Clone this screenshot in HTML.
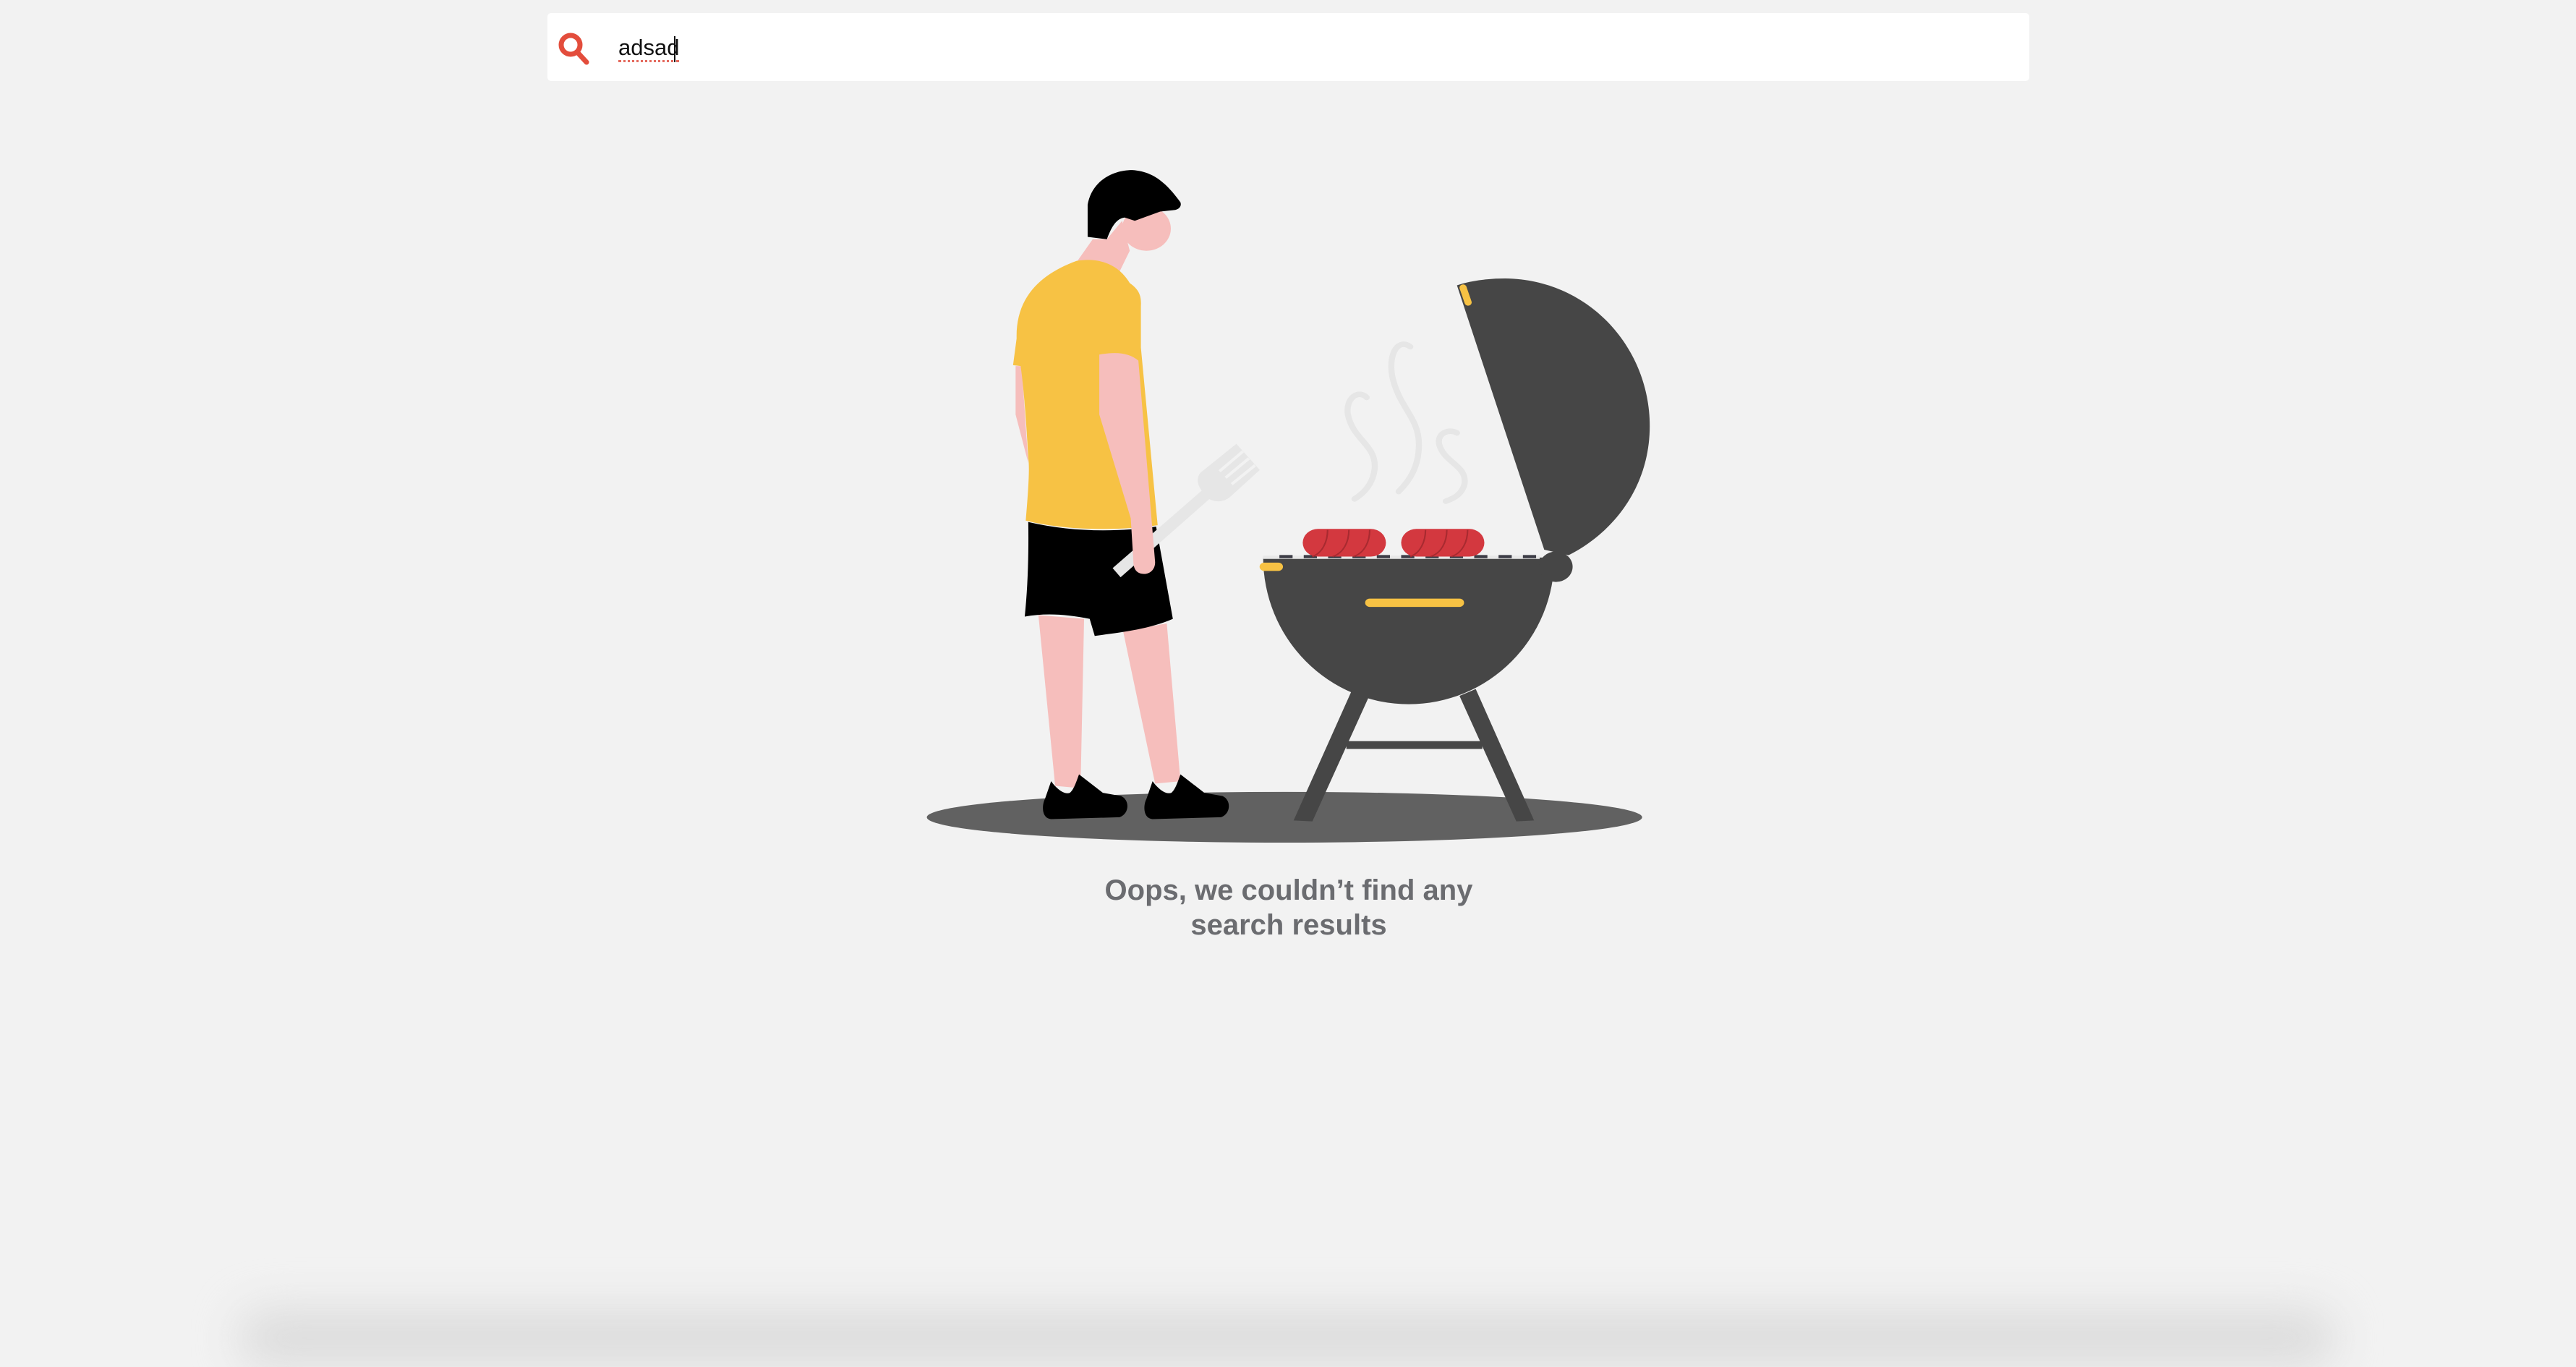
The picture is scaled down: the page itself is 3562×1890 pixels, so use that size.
<!DOCTYPE html>
<html><head><meta charset="utf-8"><style>
html,body{margin:0;padding:0;}
body{width:3562px;height:1806px;background:#f2f2f2;position:relative;overflow:hidden;font-family:"Liberation Sans",sans-serif;}
.bar{position:absolute;left:757px;top:18px;width:2049px;height:94px;background:#fff;border-radius:5px;}
.txt{position:absolute;left:855px;top:48px;font-size:31px;color:#111;}
.txt span{border-bottom:3px dotted #e46a5e;}
.caret{position:absolute;left:932px;top:50px;width:2px;height:36px;background:#111;}
.msg{position:absolute;left:1382px;width:800px;top:1207px;text-align:center;font-weight:bold;font-size:40px;line-height:48px;color:#6b6c70;}
.shade{position:absolute;left:330px;top:1810px;width:2900px;height:80px;background:#dcdcdc;filter:blur(30px);border-radius:40px;}
</style></head><body>
<div class="shade"></div>
<div class="bar"></div>
<svg style="position:absolute;left:0;top:0" width="3562" height="1806">
<circle cx="789" cy="62" r="13" fill="none" stroke="#e34d3c" stroke-width="7"/>
<line x1="799" y1="73" x2="811" y2="86" stroke="#e34d3c" stroke-width="7" stroke-linecap="round"/>
<g transform="translate(1250,200) scale(0.7015,0.6378)">
<ellipse cx="750" cy="1458" rx="705" ry="55" fill="#616161"/>
<path d="M1090,305 Q1130,290 1185,290 C1350,292 1470,440 1470,610 C1470,740 1400,840 1310,890 L1262,878 Z" fill="#464646"/>
<line x1="1102" y1="310" x2="1112" y2="342" stroke="#f7c244" stroke-width="14" stroke-linecap="round"/>
<polygon points="882,1185 915,1200 805,1467 768,1465" fill="#464646"/>
<polygon points="1095,1195 1127,1180 1242,1465 1207,1467" fill="#464646"/>
<rect x="872" y="1293" width="268" height="17" fill="#464646"/>
<path d="M708,895 L1282,895 A287,318 0 0 1 708,895 Z" fill="#464646"/>
<circle cx="1285" cy="915" r="33" fill="#464646"/>
<rect x="708" y="891" width="545" height="7" fill="#e8e8e8"/>
<line x1="740" y1="893" x2="1250" y2="893" stroke="#3c3c46" stroke-width="7" stroke-dasharray="26,22"/>
<line x1="710" y1="915" x2="738" y2="915" stroke="#f7c244" stroke-width="18" stroke-linecap="round"/>
<line x1="918" y1="993" x2="1095" y2="993" stroke="#f7c244" stroke-width="18" stroke-linecap="round"/>
<rect x="786" y="833" width="164" height="60" rx="30" fill="#d3383f"/>
<rect x="980" y="833" width="164" height="60" rx="30" fill="#d3383f"/>
<g fill="none" stroke="#a82a30" stroke-width="3">
<path d="M835,835 C835,860 825,885 805,893"/><path d="M877,835 C877,860 867,885 845,893"/><path d="M918,835 C918,860 908,885 886,893"/>
<path d="M1028,835 C1028,860 1018,885 998,893"/><path d="M1070,835 C1070,860 1060,885 1038,893"/><path d="M1111,835 C1111,860 1101,885 1079,893"/>
</g>
<g fill="none" stroke="#e6e6e6" stroke-width="12" stroke-linecap="round">
<path d="M912,548 C895,530 870,550 875,585 C885,640 930,650 928,700 C925,740 900,760 888,768"/>
<path d="M998,438 C975,420 955,450 962,500 C975,570 1015,590 1015,650 C1015,700 995,730 975,752"/>
<path d="M1090,625 C1075,615 1050,625 1055,650 C1065,690 1110,695 1105,735 C1100,760 1080,768 1068,773"/>
</g>
<polygon points="372,205 400,205 430,165 445,230 425,275 340,255" fill="#f6bebc"/>
<circle cx="478" cy="182" r="48" fill="#f6bebc"/>
<path d="M362,200 L362,130 C370,80 410,55 450,55 C490,58 515,80 545,125 C548,135 540,142 530,142 L505,145 L455,165 L435,158 C420,160 410,175 400,205 Z" fill="#000"/>
<polygon points="220,480 232,480 245,690 220,585" fill="#f6bebc"/>
<polygon points="265,1020 355,1028 348,1395 298,1390" fill="#f6bebc"/>
<polygon points="432,1055 518,1038 545,1380 495,1385" fill="#f6bebc"/>
<path d="M340,252 C380,245 420,255 445,300 C465,315 468,330 467,350 L467,440 L500,825 C440,835 330,840 240,815 C245,750 248,700 245,680 C240,580 235,520 230,480 L215,478 L222,420 C220,330 270,280 340,252 Z" fill="#f7c244"/>
<path d="M245,818 C330,840 420,840 497,828 L530,1028 C480,1052 420,1058 376,1065 L366,1028 C320,1018 280,1015 238,1023 C244,960 246,890 245,818 Z" fill="#000"/>
<g stroke="#e6e6e6" fill="#e6e6e6">
<polygon points="412,918 600,738 616,754 427,937" stroke-width="1"/>
<path d="M585,712 L655,650 L700,705 L640,765 C620,780 595,770 588,750 C578,735 578,722 585,712 Z" stroke-width="2"/>
</g>
<g stroke="#f2f2f2" stroke-width="6">
<line x1="622" y1="708" x2="668" y2="665"/><line x1="634" y1="722" x2="680" y2="680"/><line x1="646" y1="736" x2="692" y2="695"/>
</g>
<path d="M385,455 C420,448 445,452 462,468 L495,905 C495,925 480,933 468,930 C455,927 452,915 452,900 L447,810 L385,585 Z" fill="#f6bebc"/>
<path d="M290,1380 C300,1395 315,1410 327,1405 C335,1398 340,1380 345,1365 L392,1405 L428,1412 C445,1420 445,1450 425,1458 L290,1462 C270,1460 272,1430 278,1418 Z" fill="#000"/>
<path d="M490,1380 C500,1395 515,1410 527,1405 C535,1398 540,1380 545,1365 L592,1405 L628,1412 C645,1420 645,1450 625,1458 L490,1462 C470,1460 472,1430 478,1418 Z" fill="#000"/>
</g>
</svg>
<div class="txt"><span>adsad</span></div>
<div class="caret"></div>
<div class="msg">Oops, we couldn’t find any<br>search results</div>
</body></html>
